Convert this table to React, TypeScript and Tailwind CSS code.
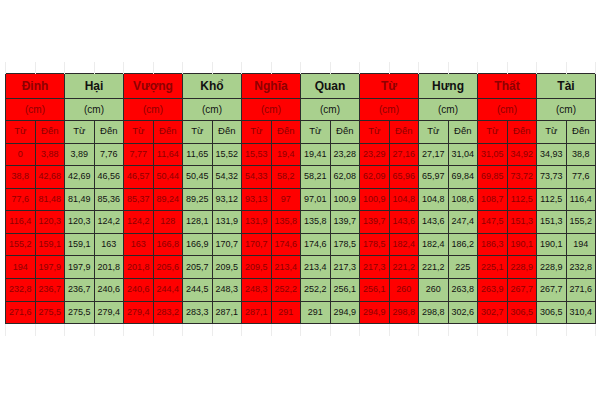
import React from 'react';

type Group = { name: string; red: boolean };

const groups: Group[] = [
    { name: 'Đinh', red: true },
    { name: 'Hại', red: false },
    { name: 'Vượng', red: true },
    { name: 'Khổ', red: false },
    { name: 'Nghĩa', red: true },
    { name: 'Quan', red: false },
    { name: 'Từ', red: true },
    { name: 'Hưng', red: false },
    { name: 'Thất', red: true },
    { name: 'Tài', red: false },
];

// each row: 20 values, pairs of (Từ, Đến) per group
const rows: string[][] = [
    ['0', '3,88', '3,89', '7,76', '7,77', '11,64', '11,65', '15,52', '15,53', '19,4', '19,41', '23,28', '23,29', '27,16', '27,17', '31,04', '31,05', '34,92', '34,93', '38,8'],
    ['38,8', '42,68', '42,69', '46,56', '46,57', '50,44', '50,45', '54,32', '54,33', '58,2', '58,21', '62,08', '62,09', '65,96', '65,97', '69,84', '69,85', '73,72', '73,73', '77,6'],
    ['77,6', '81,48', '81,49', '85,36', '85,37', '89,24', '89,25', '93,12', '93,13', '97', '97,01', '100,9', '100,9', '104,8', '104,8', '108,6', '108,7', '112,5', '112,5', '116,4'],
    ['116,4', '120,3', '120,3', '124,2', '124,2', '128', '128,1', '131,9', '131,9', '135,8', '135,8', '139,7', '139,7', '143,6', '143,6', '247,4', '147,5', '151,3', '151,3', '155,2'],
    ['155,2', '159,1', '159,1', '163', '163', '166,8', '166,9', '170,7', '170,7', '174,6', '174,6', '178,5', '178,5', '182,4', '182,4', '186,2', '186,3', '190,1', '190,1', '194'],
    ['194', '197,9', '197,9', '201,8', '201,8', '205,6', '205,7', '209,5', '209,5', '213,4', '213,4', '217,3', '217,3', '221,2', '221,2', '225', '225,1', '228,9', '228,9', '232,8'],
    ['232,8', '236,7', '236,7', '240,6', '240,6', '244,4', '244,5', '248,3', '248,3', '252,2', '252,2', '256,1', '256,1', '260', '260', '263,8', '263,9', '267,7', '267,7', '271,6'],
    ['271,6', '275,5', '275,5', '279,4', '279,4', '283,2', '283,3', '287,1', '287,1', '291', '291', '294,9', '294,9', '298,8', '298,8', '302,6', '302,7', '306,5', '306,5', '310,4'],
];

const redCell = 'bg-[#ff0000] text-[#8e0000]';
const greenCell = 'bg-[#a9d08e] text-[#111111]';
const border = 'border border-[#2a2a2a]';

export default function App() {
    return (
        <div className="w-[600px] h-[400px] bg-white pt-[62px] pl-[5px] font-['Liberation_Sans',Arial,sans-serif]">
            <table className="table-fixed w-[590px] border-collapse text-center">
                <colgroup>
                    {Array.from({ length: 20 }).map((_, i) => (
                        <col key={i} className="w-[29.5px]" />
                    ))}
                </colgroup>
                <tbody>
                    {/* faint sheet gridlines above */}
                    <tr className="h-[11px]">
                        {Array.from({ length: 20 }).map((_, i) => (
                            <td key={i} className="border-x border-[#ececec] p-0" />
                        ))}
                    </tr>
                    <tr className="h-[25px]">
                        {groups.map((g) => (
                            <td key={g.name} colSpan={2} className={`${border} ${g.red ? redCell : greenCell} p-0 text-[12px] font-bold`}>
                                {g.name}
                            </td>
                        ))}
                    </tr>
                    <tr className="h-[22px]">
                        {groups.map((g) => (
                            <td key={g.name} colSpan={2} className={`${border} ${g.red ? redCell : greenCell} p-0 text-[10px]`}>
                                (cm)
                            </td>
                        ))}
                    </tr>
                    <tr className="h-[23px]">
                        {groups.map((g) => (
                            <React.Fragment key={g.name}>
                                <td className={`${border} ${g.red ? redCell : greenCell} p-0 text-[9.5px]`}>Từ</td>
                                <td className={`${border} ${g.red ? redCell : greenCell} p-0 text-[9.5px]`}>Đến</td>
                            </React.Fragment>
                        ))}
                    </tr>
                    {rows.map((r, ri) => (
                        <tr key={ri} className="h-[22.6px]">
                            {r.map((v, ci) => {
                                const g = groups[Math.floor(ci / 2)];
                                return (
                                    <td key={ci} className={`${border} ${g.red ? redCell : greenCell} p-0 text-[9px] whitespace-nowrap`}>
                                        {v}
                                    </td>
                                );
                            })}
                        </tr>
                    ))}
                    {/* faint sheet gridlines below */}
                    <tr className="h-[12px]">
                        {Array.from({ length: 20 }).map((_, i) => (
                            <td key={i} className="border-x border-[#ececec] p-0" />
                        ))}
                    </tr>
                </tbody>
            </table>
        </div>
    );
}
